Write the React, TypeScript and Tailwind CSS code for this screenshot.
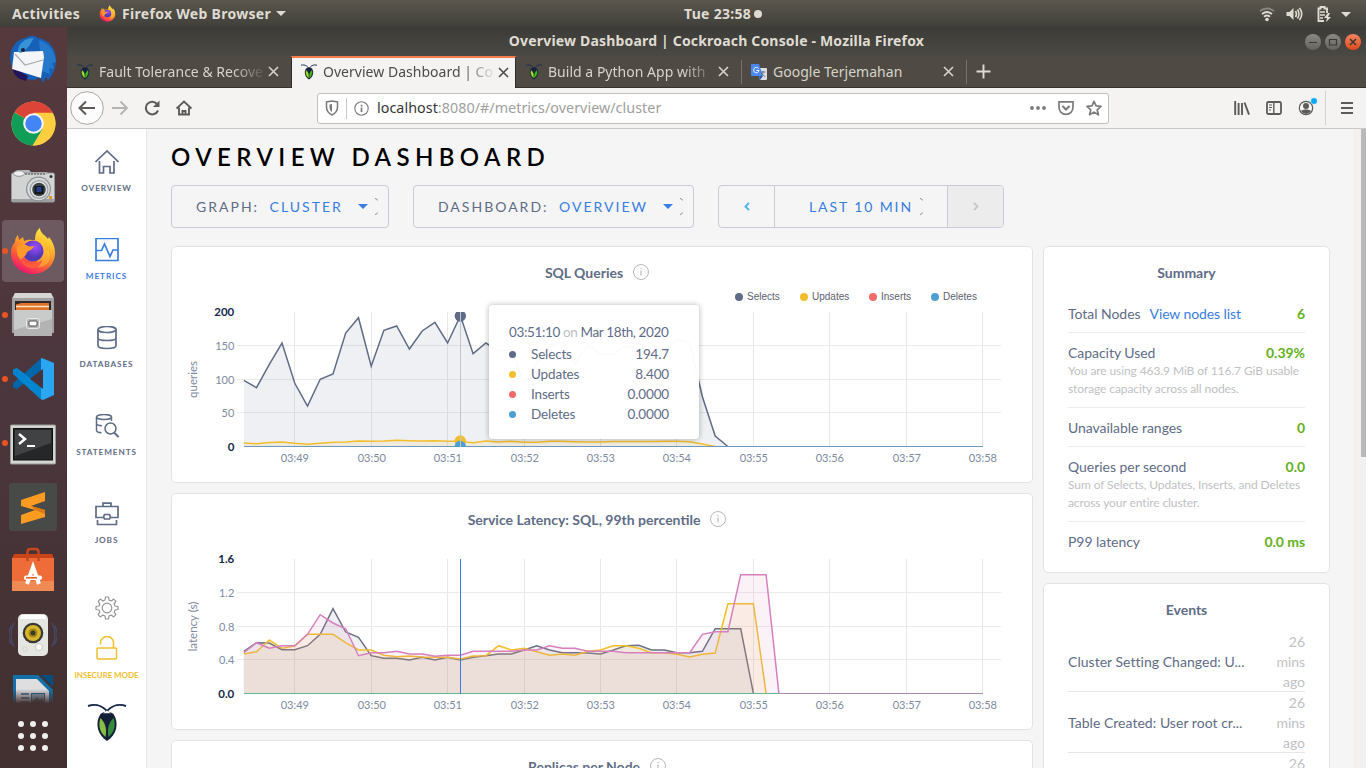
import React from "react";

type Kids = { children?: React.ReactNode };

const STEP = 12.74;
const X0 = 243.8;

const selects = [
  380.3, 387.7, 364.3, 343, 383.3, 406, 379.3, 374, 333, 317.7, 366.3, 330.3, 326, 349, 331, 322.3, 343, 315.8,
  353.7, 343, 351, 349.3, 384, 363.3, 346.7, 341.7, 364, 345, 354.3, 354.3, 345.7, 350, 344, 353.3, 339, 343.3,
  396.7, 436, 446.5,
];
const updates = [
  443, 443.7, 442.5, 442, 443.3, 444.3, 443.3, 442.3, 442, 441, 441.3, 441, 440.3, 440.7, 441, 440.7, 441.3, 441.3,
  442.7, 441, 442, 441.3, 442.3, 442.3, 441.3, 441.3, 441.7, 442, 442, 441.5, 441.5, 441.5, 441.5, 441.3, 441.3, 441.7,
  444, 446.5,
];
const z2 = (a: number[]) => a.map((z) => 490 + z / 3);
const latencyA = z2([
  484, 458, 459, 479, 479, 467, 433, 356, 426, 442, 497, 505, 505, 510, 502, 510, 502, 510, 502, 497, 492, 492, 480,
  467, 480, 488, 488, 489, 492, 480, 467, 466, 480, 480, 488, 488, 484, 416, 416, 416, 610,
]);
const latencyB = z2([
  492, 485, 450, 475, 468, 433, 433, 433, 458, 480, 480, 496, 500, 498, 501, 502, 502, 507, 498, 497, 467, 480, 475,
  485, 496, 492, 496, 484, 480, 467, 467, 475, 488, 488, 493, 501, 493, 489, 341, 341, 341, 610,
]);
const latencyC = z2([
  488, 458, 475, 467, 467, 433, 374, 399, 416, 497, 488, 488, 484, 492, 492, 499, 496, 496, 484, 484, 484, 484, 480,
  480, 467, 475, 475, 484, 484, 484, 488, 488, 488, 488, 488, 488, 433, 425, 425, 254, 254, 254, 610,
]);

function Series({ data, base, color, fill }: { data: number[]; base: number; color: string; fill: string }) {
  const pts = data.map((y, i) => `${(X0 + i * STEP).toFixed(1)},${y.toFixed(1)}`).join(" ");
  const end = X0 + (data.length - 1) * STEP;
  return (
    <g>
      <polygon points={`${X0},${base} ${pts} ${end},${base}`} fill={fill} fillOpacity="0.1" />
      <polyline points={pts} fill="none" stroke={color} strokeWidth="1.5" />
    </g>
  );
}

function Axes({ top, labels, title }: { top: number; labels: string[]; title: string }) {
  const times = ["03:49", "03:50", "03:51", "03:52", "03:53", "03:54", "03:55", "03:56", "03:57", "03:58"];
  const xs = [294.5, 371.5, 447.5, 524.5, 600.5, 676.5, 753.5, 829.5, 906.5, 982.5];
  return (
    <g fontSize="11">
      {xs.map((x, i) => (
        <g key={x}>
          <line x1={x} x2={x} y1={top} y2={top + 135} stroke="#e8e8e8" />
          <text x={x + 0.3} y={top + 150} textAnchor="middle" fill="#7e8a9f">
            {times[i]}
          </text>
        </g>
      ))}
      {[1, 2, 3].map((i) => (
        <line key={i} x1="237" x2="1001" y1={top + Math.round(i * 33.8) - 0.5} y2={top + Math.round(i * 33.8) - 0.5} stroke="#ebebeb" />
      ))}
      {labels.map((l, i) => (
        <text
          key={l}
          x="234.3"
          y={top + 4 + i * 33.75}
          textAnchor="end"
          fill={i % 4 === 0 ? "#152849" : "#7e8a9f"}
          fontWeight={i % 4 === 0 ? 700 : 400}
          fontSize={i % 4 === 0 ? 11.5 : 11}
        >
          {l}
        </text>
      ))}
      <text transform={`translate(197 ${top + 67.5}) rotate(-90)`} textAnchor="middle" fill="#7e8a9f" fontSize="11.5">
        {title}
      </text>
    </g>
  );
}

function InfoDot() {
  return (
    <svg className="ml-[10px] size-4 shrink-0" viewBox="0 0 16 16" fill="none" stroke="#b9b9b9">
      <circle cx="8" cy="8" r="7.5" />
      <path d="M8 6.600v5M8 4v1.200" strokeWidth="1.200" />
    </svg>
  );
}

function GraphCard({ title, children }: Kids & { title: string }) {
  return (
    <section className="h-[237px] w-[862px] shrink-0 rounded-[5px] border border-[#e2e3e4] bg-white">
      <div className="flex h-[51px] items-center justify-center pr-[10px] text-[14px] font-bold text-[#5f6c87]">
        <span>{title}</span>
        <span className="-mt-px">
          <InfoDot />
        </span>
      </div>
      {children}
    </section>
  );
}

function QueriesChart() {
  return (
    <div className="relative">
      <svg className="block h-[184px] w-[860px]" viewBox="172 298 860 184">
        <Axes top={312} labels={["200", "150", "100", "50", "0"]} title="queries" />
        <Series data={selects} base={446.5} color="#5f6c87" fill="#5f6c87" />
        <Series data={updates} base={446.5} color="#f2be2c" fill="#f2be2c" />
        <line x1="244" x2="983" y1="446.5" y2="446.5" stroke="#6d98bd" />
        <clipPath id="plot">
          <rect x="240" y="312" width="750" height="135" />
        </clipPath>
        <g clipPath="url(#plot)">
          <circle cx="460.3" cy="316" r="5.7" fill="#5f6c87" />
          <circle cx="460.3" cy="441" r="5.7" fill="#f2be2c" />
          <circle cx="460.3" cy="446.5" r="5.7" fill="#4e9fd1" />
          <line x1="460.5" x2="460.5" y1="312" y2="447" stroke="#c3c5ca" />
        </g>
      </svg>
      <div className="absolute top-[-9px] left-[562px] flex h-[14px] items-center font-['Liberation_Sans',sans-serif] text-[10px] text-[#5c6070]">
        {[
          ["bg-[#5f6c87]", "Selects", "w-[65px]"],
          ["bg-[#f2be2c]", "Updates", "w-[69px]"],
          ["bg-[#f16969]", "Inserts", "w-[62px]"],
          ["bg-[#4e9fd1]", "Deletes", "w-[60px]"],
        ].map(([dot, name, w]) => (
          <span key={name} className={`flex items-center gap-1 ${w}`}>
            <i className={`mt-px ml-px size-2 shrink-0 rounded-full ${dot}`} />
            {name}
          </span>
        ))}
      </div>
      <div className="absolute top-[7px] left-[317px] h-[134px] w-[210px] rounded-[4px] bg-white/97 pt-[17px] pr-[30px] pl-5 text-[13.5px] leading-5 text-[#5f6c87] shadow-[0_0_5px_1px_rgba(0,0,0,0.22)]">
        <div className="mb-[2px] tracking-[-0.36px] whitespace-nowrap">
          03:51:10 <span className="text-[#bcbfc5]">on</span> Mar 18th, 2020
        </div>
        {[
          ["bg-[#5f6c87]", "Selects", "194.7"],
          ["bg-[#f2be2c]", "Updates", "8.400"],
          ["bg-[#f16969]", "Inserts", "0.0000"],
          ["bg-[#4e9fd1]", "Deletes", "0.0000"],
        ].map(([dot, name, v]) => (
          <div key={name} className="flex h-5 items-center tracking-[-0.15px]">
            <i className={`mr-[15px] size-[7px] rounded-full ${dot}`} />
            <span className="flex-1">{name}</span>
            <span>{v}</span>
          </div>
        ))}
      </div>
    </div>
  );
}

function LatencyChart() {
  return (
    <svg className="block h-[184px] w-[860px]" viewBox="172 545 860 184">
      <Axes top={559} labels={["1.6", "1.2", "0.8", "0.4", "0.0"]} title="latency (s)" />
      <Series data={latencyA} base={693.5} color="#6b7083" fill="#5f6c87" />
      <Series data={latencyB} base={693.5} color="#f2be2c" fill="#f2be2c" />
      <Series data={latencyC} base={693.5} color="#d77fbf" fill="#d77fbf" />
      <line x1="244" x2="779" y1="693.5" y2="693.5" stroke="#62b794" />
      <line x1="779" x2="983" y1="693.5" y2="693.5" stroke="#a98bb4" />
      <line x1="460.5" x2="460.5" y1="559" y2="694" stroke="#3a7de1" />
    </svg>
  );
}

function SideItem({ label, active, children }: Kids & { label: string; active?: boolean }) {
  return (
    <div className={`flex h-[88px] w-full shrink-0 flex-col items-center pt-[21px] ${active ? "text-[#3a7de1]" : "text-[#5f6c87]"}`}>
      <svg className="ml-px size-6" viewBox="0 0 24 24" fill="none" stroke="currentColor" strokeWidth="1.7">
        {children}
      </svg>
      <span className="mt-[8px] text-[8.2px] leading-3 font-bold tracking-[0.9px]">{label}</span>
    </div>
  );
}

function Sidebar() {
  return (
    <nav className="flex w-20 shrink-0 flex-col items-center border-r border-[#e7e7e7] bg-white">
      <SideItem label="OVERVIEW">
        <path d="M.5 12 12 1l11.500 11M4.500 11v12h4v-6.500h6.500V23h4V11" />
      </SideItem>
      <SideItem label="METRICS" active>
        <path d="M1 0.500h22v22H1zM1 12.500h5.500l3-6.500 5.500 12.500 3-6.500h5" />
      </SideItem>
      <SideItem label="DATABASES">
        <ellipse cx="12" cy="3.500" rx="9" ry="3" />
        <path d="M3 3.500v16c0 1.800 4 3 9 3s9-1.200 9-3v-16M3 12c0 1.500 4 2.500 9 2.500s9-1 9-2.500" />
      </SideItem>
      <SideItem label="STATEMENTS">
        <g strokeWidth="1.500">
          <ellipse cx="9" cy="3" rx="7.500" ry="2.500" />
          <path d="M1.500 3v13.500c0 1.300 2 2 5 2.300M16.500 3V7M1.500 9.500c0 1.300 2 2 5.500 2.300" />
          <circle cx="15.500" cy="14.500" r="5.500" />
          <path d="m19.500 19 4 4" strokeWidth="2" />
        </g>
      </SideItem>
      <SideItem label="JOBS">
        <path d="M8 4.200V1.200h8v3M9 15.500H1V4.500h22v11h-8M2.500 18v4.500h19V18M9.500 12.500h5l1 2.500-1 2H9.500l-1-2z" />
      </SideItem>
      <svg className="mt-[27px] ml-px size-6 shrink-0" viewBox="-12 -12 24 24" fill="none" stroke="#969696" strokeWidth="1.200">
        <circle r="4.800" />
        <path d="M-2-8-1.500-11h3L2-8 4.200-7.100 6.700-8.900 8.900-6.700 7.100-4.200 8-2 11-1.500v3L8 2 7.100 4.200 8.900 6.700 6.700 8.900 4.200 7.100 2 8 1.500 11h-3L-2 8-4.200 7.100-6.700 8.900-8.900 6.700-7.100 4.200-8 2-11 1.500v-3L-8-2-7.100-4.200-8.900-6.700-6.700-8.900-4.200-7.100z" strokeLinejoin="round" />
      </svg>
      <svg className="mt-[16px] ml-px size-6 shrink-0" viewBox="0 0 24 24" fill="none" stroke="#f2be2c" strokeWidth="1.500">
        <rect x="2" y="12" width="19.500" height="11" rx="1" />
        <path d="M5.500 8.500V6.500a6.500 6 0 0 1 13 0V12" />
      </svg>
      <span className="mt-[9px] text-[8px] leading-3 font-bold tracking-[-0.08px] whitespace-nowrap text-[#f2be2c]">INSECURE MODE</span>
      <svg className="mt-[21px] h-[40px] w-[40px] shrink-0" viewBox="0 0 40 40">
        <path d="M1 4c9-3 17 1 22 9M39 4C30 1 22 5 17 13" fill="none" stroke="#152849" strokeWidth="1.900" />
        <path d="M13.500 12c4-3 9-3 13 0 6 9 3 21-6.500 27-9.500-6-12.500-18-6.500-27z" fill="#142038" />
        <path d="M13.500 16c5 5 6.500 11 5 19-6-5-7.500-12-5-19z" fill="#87bc42" />
        <path d="M26.500 16c-5 5-6.500 11-5 19 6-5 7.500-12 5-19z" fill="#358a3c" />
        <path d="m16 11.300 4-2.800 4 2.800z" fill="#fff" />
      </svg>
    </nav>
  );
}

function Bug() {
  return (
    <svg className="size-4 shrink-0" viewBox="0 0 16 16">
      <path d="M0 1.200c4-.8 6 .5 8.500 4M16 1.200c-4-.8-6 .5-8.500 4" fill="none" stroke="#1c2c4c" />
      <path d="M5 4.500c2-1.200 4-1.200 6 0 2.500 4 1 8.500-3 11-4-2.500-5.500-7-3-11z" fill="#17233c" />
      <path d="M5.300 6.500c2 2 2.500 4 2.100 7.300-2-2.300-3.300-4.500-2.100-7.300z" fill="#a4e02a" stroke="#a4e02a" strokeWidth=".4" />
      <path d="M10.700 6.500c-2 2-2.500 4-2.100 7.300 2-2.300 3.300-4.500 2.100-7.300z" fill="#3dbb1d" stroke="#3dbb1d" strokeWidth=".4" />
    </svg>
  );
}

function Cross() {
  return (
    <svg className="size-[11px] shrink-0" viewBox="0 0 11 11" fill="none" stroke="currentColor" strokeWidth="1.600">
      <path d="m1 1 9 9M10 1l-9 9" />
    </svg>
  );
}

function Tab({ title, icon, active, sep, width, fade = true }: { title: string; icon?: React.ReactNode; active?: boolean; sep?: boolean; width: string; fade?: boolean }) {
  return (
    <div
      className={
        active
          ? `flex h-8 items-center border-x border-t-2 border-x-[#2f2e2a] border-t-[#f47c4c] bg-[#f4f3f2] pr-3 pb-[2px] pl-[9px] text-[#4b4b4b] ${width}`
          : `relative flex h-8 items-center border-b border-[#33322e] pr-3 pl-[10px] text-[#d6d3cb] ${width}`
      }
    >
      {sep && <i className="absolute top-1 left-0 h-6 w-px bg-[#75726a]" />}
      {icon ?? <Bug />}
      <span
        className={`ml-[6px] flex-1 text-[14px] leading-5 tracking-[0.02px] whitespace-nowrap ${fade ? "[mask-image:linear-gradient(to_right,#000_82%,transparent_102%)]" : ""}`}
      >
        {title}
      </span>
      <span className="ml-[5px] flex">
        <Cross />
      </span>
    </div>
  );
}

function FirefoxLogo({ className }: { className: string }) {
  return (
    <svg className={className} viewBox="0 0 48 48">
      <defs>
        <linearGradient id="ffa" x1=".8" y1="0" x2=".3" y2="1">
          <stop offset="0" stopColor="#fff14c" />
          <stop offset=".35" stopColor="#ffb42a" />
          <stop offset=".65" stopColor="#ff6a30" />
          <stop offset="1" stopColor="#ed1170" />
        </linearGradient>
        <radialGradient id="ffb" cx=".6" cy=".3">
          <stop offset="0" stopColor="#a04cff" />
          <stop offset="1" stopColor="#5139b8" />
        </radialGradient>
      </defs>
      <path d="M6 15c0-3 1-5 3-7l1 5 4-3 1 4c4-2 8-1 11-1 0-6 2-10 5-12 0 5 5 7 8 11l1-2c4 5 6 10 6 16 0 12-10 21-22 21S2 38 2 26c0-4 1-8 4-11z" fill="url(#ffa)" />
      <path d="M27 13c6 0 9 4 9 8s5 0 5 8-7 12-13 11" fill="#ffd23c" opacity=".45" />
      <circle cx="24" cy="24" r="10.500" fill="url(#ffb)" />
      <path d="M8 20c4-3 8-3 11-1 2 1 4 0 6 0-1 3-4 4-7 6-1 5-5 5-6 8-3-3-5-8-4-13z" fill="#ff9a2a" />
      <path d="M12 31c4 7 15 7 21 2-1 7-7 9-12 8s-9-5-9-10z" fill="#ff5a3a" />
    </svg>
  );
}

function DockItem({ dot, active, children }: Kids & { dot?: boolean; active?: boolean }) {
  return (
    <div className="relative flex h-16 w-[67px] shrink-0 items-center justify-center pr-px">
      <div className={`flex size-[62px] items-center justify-center rounded-[4px] ${active ? "bg-[#6d5a60]" : ""}`}>{children}</div>
      {dot && <i className="absolute top-[29px] left-[2px] size-[6px] rounded-full bg-[#e95420]" />}
    </div>
  );
}

function Dock() {
  return (
    <aside className="flex w-[67px] shrink-0 flex-col bg-linear-to-b from-[#55393d] via-[#4b363d] to-[#41302f]">
      <DockItem>
        <svg className="size-12" viewBox="0 0 48 48">
          <path d="M1 22C2 10 9 4 17 3c3-3 9-3 12 0 12 2 18 11 18 22 0 10-4 16-8 20l-2-3-3 6-3-6-5 3C10 45 1 34 1 22z" fill="#1760b7" />
          <path d="M30 5c9 3 16 10 17 22l-4 1 2 6-5-1 1 6-8-3z" fill="#2e83d2" opacity=".7" />
          <path d="M3 32c1 7 5 12 14 14l2-5z" fill="#21145b" />
          <path d="m5 17 29-1 1 6-3 21-29-9z" fill="#f4f5f6" />
          <path d="m6 19 10 11 18-5" fill="none" stroke="#a9adb3" strokeWidth="1.200" />
          <path d="M9 17c0-9 7-14 16-14-3 3-3 9-13 15z" fill="#3593d8" />
          <circle cx="14" cy="15" r="2" fill="#16213c" />
        </svg>
      </DockItem>
      <DockItem>
        <svg className="size-[45px]" viewBox="0 0 48 48">
          <circle cx="24" cy="24" r="23.500" fill="#ffcd40" />
          <path d="M24 24 3.700 12A23.500 23.500 0 0 1 44.400 12.500H24z" fill="#db4437" />
          <path d="M3.700 12.200A23.500 23.500 0 0 0 23 47.500L34 30 24 24z" fill="#109d58" />
          <path d="M24 13h20.700a23.500 23.500 0 0 1-21.500 34.500L34 29z" fill="#ffcd40" />
          <circle cx="24" cy="24" r="11" fill="#f3f3f3" />
          <circle cx="24" cy="24" r="8.800" fill="#4385f5" />
        </svg>
      </DockItem>
      <DockItem>
        <svg className="size-12" viewBox="0 0 48 48">
          <path d="M5 11 8 7h12l2 2h16l2 3H6z" fill="#b9babb" />
          <rect x="2.500" y="10" width="43" height="29" rx="1.500" fill="#d2d3d3" stroke="#94989a" />
          <path d="M3 36h42v3H3z" fill="#9d9fa1" />
          <circle cx="29.500" cy="26" r="12.500" fill="#8d9194" />
          <circle cx="29.500" cy="26" r="11.300" fill="#d8dada" />
          <circle cx="30" cy="26.500" r="9.500" fill="#9a9fa2" />
          <circle cx="30" cy="26.500" r="8.300" fill="#e3e5e5" />
          <circle cx="30" cy="26.500" r="6.800" fill="#3a4044" />
          <rect x="25.500" y="23" width="9" height="8" fill="#15181b" />
          <rect x="27.500" y="24" width="5" height="5" fill="#243e8b" />
          <circle cx="42" cy="13.500" r="1.500" fill="#303334" />
          <rect x="40" y="33" width="3" height="3" fill="#e09a28" />
          <ellipse cx="10" cy="10.500" rx="5.500" ry="2.800" fill="#f0f0f0" stroke="#8f9193" />
          <path d="M16 11h20" stroke="#6f7274" strokeWidth="1.500" strokeDasharray="2 1" />
        </svg>
      </DockItem>
      <DockItem dot active>
        <FirefoxLogo className="size-12" />
      </DockItem>
      <DockItem dot>
        <svg className="size-12" viewBox="0 0 48 48">
          <path d="M6 2h36l3 5v35H3V7z" fill="#9fa09f" />
          <path d="M6 2h36l2 5H4z" fill="#d6d6d5" />
          <path d="M6 10h36v12H6z" fill="#2b2b29" />
          <path d="M7 13.500 12 12h28v7H7z" fill="#e0702a" />
          <path d="M7 15.500h33" stroke="#fbe3c0" strokeWidth="1.300" />
          <path d="M5 19h38v26H5z" fill="#b2b3b2" />
          <path d="M5 19h38v9L5 39z" fill="#c9caca" />
          <rect x="17.500" y="27.500" width="13" height="10" rx="2" fill="#b5b6b6" stroke="#e9e9e9" />
          <rect x="20" y="30" width="8" height="5" rx="1" fill="#fff" stroke="#4c4d4b" />
        </svg>
      </DockItem>
      <DockItem dot>
        <svg className="size-12" viewBox="0 0 48 48">
          <path d="M32.500 3 4 28.500v4L8 34l26-20z" fill="#0065a9" />
          <path d="M4 14.500 8 13l26 20-1.500 12L4 19z" fill="#0086d1" />
          <path d="M34 3.500 45 8v32l-11 5-2-1V3z" fill="#2aa6f2" />
          <path d="m34 14-13 10 13 10z" fill="#48333c" />
        </svg>
      </DockItem>
      <DockItem dot>
        <svg className="size-12" viewBox="0 0 48 48">
          <rect x="1.500" y="6" width="45" height="39" rx="1" fill="#d4d4d2" stroke="#999a96" />
          <rect x="4.500" y="9.500" width="39" height="31.500" fill="#252728" stroke="#111" />
          <path d="M6 11h36v13L6 37z" fill="#494c4d" opacity=".75" />
          <path d="m10 15 6 5-6 5" fill="none" stroke="#fff" strokeWidth="2.500" />
          <path d="M18 27h8" stroke="#fff" strokeWidth="2" />
        </svg>
      </DockItem>
      <DockItem>
        <svg className="size-12" viewBox="0 0 48 48">
          <rect width="48" height="48" rx="3" fill="#484a47" />
          <path d="m12 17 24-8v9l-14 5 14 4v7l-24 7v-9l14-5-14-4z" fill="#ff9b21" />
          <path d="m22 23 14 4v4l-10-4z" fill="#dc7912" />
        </svg>
      </DockItem>
      <DockItem>
        <svg className="size-12" viewBox="0 0 48 48">
          <path d="M3 12 5 7h38l2 5z" fill="#c84318" />
          <path d="M3 11h42v33H3z" fill="#ee6c38" />
          <path d="M3 34h42v10H3z" fill="#f08a55" />
          <path d="M18.500 14V5q0-3 3-3h5q3 0 3 3v9" fill="none" stroke="#c8461c" strokeWidth="2.500" />
          <path d="m18 37 6-17 6 17" fill="none" stroke="#fff" strokeWidth="4" />
          <rect x="15" y="28.500" width="18" height="4.500" rx="2" fill="#fff" />
          <path d="M17 30.800h11" stroke="#e36633" strokeWidth="1.700" />
        </svg>
      </DockItem>
      <DockItem>
        <svg className="size-12" viewBox="0 0 48 48">
          <path d="M5 12c-4 7-4 17 0 24M43 12c4 7 4 17 0 24M2 15c-3 6-3 12 0 18M46 15c3 6 3 12 0 18" fill="none" stroke="#46496a" strokeWidth="1.300" />
          <rect x="9" y="3" width="30" height="42" rx="5" fill="#e5e5e2" />
          <path d="M12 4h24l1 4H11z" fill="#fff" />
          <circle cx="24" cy="22" r="10.300" fill="#373835" />
          <circle cx="24" cy="22" r="8" fill="#d8b62b" />
          <circle cx="24" cy="22" r="4.500" fill="#a48518" />
          <circle cx="24" cy="22" r="2.500" fill="#3b3a26" />
          <circle cx="30" cy="36" r="3.500" fill="#fafaf9" stroke="#c8c8c4" />
          <path d="M14 36h4v4h-4z" fill="none" stroke="#d4d4d0" />
        </svg>
      </DockItem>
      <div className="flex h-[36px] shrink-0 items-start justify-center overflow-hidden pt-[8px] pr-px">
        <svg className="h-[28px] w-[42px] [mask-image:linear-gradient(to_bottom,#000_50%,transparent_102%)]" viewBox="0 0 42 28">
          <path d="M1 0h25l15 15v13H1z" fill="#1271a8" />
          <path d="M29 0h12v12z" fill="#064f7d" />
          <path d="M4 4h21l12 12v12H4z" fill="#dedee0" />
          <path d="M9 19h8M9 23h8M9 27h8" stroke="#23648f" strokeWidth="1.500" />
          <rect x="19.500" y="18.500" width="13" height="9" fill="#8ca7bb" stroke="#23648f" />
          <path d="m20 27 5-5 3 3 2-2 2 4z" fill="#40605d" />
        </svg>
      </div>
      <div className="mt-[18px] flex justify-center">
        <div className="grid grid-cols-3 gap-[6px] pr-px">
          {Array.from({ length: 9 }, (_, i) => (
            <i key={i} className="size-[6px] rounded-full bg-[#f1eeee]" />
          ))}
        </div>
      </div>
    </aside>
  );
}

function TopBar() {
  return (
    <header className="flex h-[27px] shrink-0 items-center bg-linear-to-b from-[#5b574f] to-[#403f39] font-['Noto_Sans',sans-serif] text-[14px] font-bold tracking-[0.3px] text-[#dfdbd2]">
      <span className="w-[86px] pl-3">Activities</span>
      <FirefoxLogo className="ml-[13px] size-[17px]" />
      <span className="ml-[6px] w-[150px] whitespace-nowrap">Firefox Web Browser</span>
      <svg className="ml-[4px] h-[5px] w-[10px]" viewBox="0 0 10 5">
        <path d="M0 0h10L5 5z" fill="#dfdbd2" />
      </svg>
      <span className="ml-[398px] w-[66px] whitespace-nowrap">Tue 23:58</span>
      <i className="ml-[4px] size-[8px] rounded-full bg-[#dfdbd2]" />
      <svg className="ml-auto h-[18px] w-[94px] shrink-0" viewBox="0 0 94 18" fill="none" stroke="#dfdbd2">
        <path d="M1 6q7-5 14 0" stroke="#8b8881" strokeWidth="1.800" />
        <path d="M3 9q5-4 10 0M5 11.800q3-2.500 6 0" strokeWidth="1.800" />
        <circle cx="8" cy="14.500" r="1.800" fill="#dfdbd2" stroke="none" />
        <path d="M27.500 7h3l4-4v12l-4-4h-3z" fill="#dfdbd2" stroke="none" />
        <path d="M36.500 6q2 3 0 6M38.500 4.500q3 4.500 0 9M40.500 3q4.500 6 0 12" strokeWidth="1.600" />
        <g transform="translate(1 0)">
          <path d="M67 8V3.500h-2.500V2h-4v1.500H58.500V16H64" strokeWidth="1.900" />
          <path d="M60 7h5M60 10h5M60 13h3" strokeWidth="1.300" />
          <path d="m68 8-4 5h3l-1 4 5-5h-3l2-4z" fill="#dfdbd2" stroke="none" />
        </g>
        <path d="M82 7h10l-5 5z" fill="#dfdbd2" stroke="none" />
      </svg>
      <span className="w-[13px]" />
    </header>
  );
}

function WindowButton({ className, children }: Kids & { className: string }) {
  return (
    <svg className={`size-4 rounded-full ${className}`} viewBox="0 0 16 16" fill="none" stroke="#3b3933" strokeWidth="1.200">
      {children}
    </svg>
  );
}

function BrowserChrome() {
  return (
    <div className="shrink-0 font-['Noto_Sans',sans-serif]">
      <div className="relative flex h-[29px] items-center justify-center bg-linear-to-b from-[#3c3b37] to-[#4b4943] text-[14px] font-bold tracking-[0.18px] text-[#dfdbd2]">
        <span className="pb-[2px]">Overview Dashboard | Cockroach Console - Mozilla Firefox</span>
        <div className="absolute right-[5px] flex gap-1">
          <WindowButton className="bg-linear-to-b from-[#8b8a84] to-[#65635d]"><path d="M4 8.500h8" /></WindowButton>
          <WindowButton className="bg-linear-to-b from-[#8b8a84] to-[#65635d]"><path d="M4.500 5.500h7v5.500h-7z" /></WindowButton>
          <WindowButton className="bg-linear-to-b from-[#f5855e] to-[#dd4814]"><path d="m5 5 6 6M11 5l-6 6" strokeWidth="1.600" /></WindowButton>
        </div>
      </div>
      <div className="flex h-8 bg-[#4f4b44]">
        <Tab title="Fault Tolerance & Recove" width="w-[224px]" />
        <Tab title="Overview Dashboard | Co" active width="w-[225px]" />
        <Tab title="Build a Python App with" width="w-[225px]" />
        <Tab
          title="Google Terjemahan"
          sep
          fade={false}
          width="w-[225px]"
          icon={
            <svg className="size-4 shrink-0" viewBox="0 0 16 16">
              <path d="M6 4h9q1 0 1 1v10q0 1-1 1H9z" fill="#dedfe0" />
              <path d="M1 0h7l4 12H1q-1 0-1-1V1q0-1 1-1z" fill="#4a89ef" />
              <path d="M7.500 4.500A2.700 2.700 0 1 0 8 6.500H5.500" fill="none" stroke="#fff" />
              <path d="M9.500 8h5M12 7v1c0 2-1 3-2 4M10.800 9c1 2 2 3 3.500 3.500" fill="none" stroke="#6c7580" />
              <path d="M8 12h4l-3 4z" fill="#2858b5" />
            </svg>
          }
        />
        <i className="mt-1 h-6 w-px bg-[#75726a]" />
        <svg className="mt-[8px] ml-[9px] size-[15px]" viewBox="0 0 15 15" stroke="#dfdbd2" strokeWidth="1.900">
          <path d="M7.500.5v14M.5 7.500h14" />
        </svg>
        <span className="-ml-[25px] flex-1 border-b border-[#33322e]" />
      </div>
      <div className="flex h-[41px] items-center border-b border-[#cbc8c5] bg-[#f4f3f2] text-[#5c5b59]">
        <svg className="ml-[3px] size-[34px]" viewBox="0 0 34 34" fill="none" stroke="currentColor" strokeWidth="2">
          <circle cx="17" cy="17" r="16.300" fill="#fcfcfc" stroke="#a9a7a4" strokeWidth="1" />
          <path d="M25 17H10M16 10.500 9.500 17l6.500 6.500" />
        </svg>
        <svg className="ml-[8px] size-4" viewBox="0 0 16 16" fill="none" stroke="#b5b3b1" strokeWidth="1.900">
          <path d="M0 8h14.500M8.500 1.500 15 8l-6.500 6.500" />
        </svg>
        <svg className="ml-[16px] size-4" viewBox="0 0 16 16" fill="none" stroke="currentColor" strokeWidth="2">
          <path d="M14 10.500A6.300 6.300 0 1 1 13 4" />
          <path d="M15.500.5v6.500H9z" fill="currentColor" stroke="none" />
        </svg>
        <svg className="ml-[16px] size-4" viewBox="0 0 16 16" fill="none" stroke="currentColor" strokeWidth="1.900">
          <path d="m.5 8.500 7.500-7 7.500 7M3 7.500v7h10v-7M6.500 15v-4h3v4" />
        </svg>
        <div className="ml-[125px] flex h-[31px] w-[792px] items-center rounded-[3px] border border-[#c3c0bc] bg-white text-[#7b7b7a]">
          <svg className="ml-[7px] h-4 w-[14px]" viewBox="0 0 14 16" fill="none" stroke="currentColor" strokeWidth="1.500">
            <path d="m7 1 5.500 1v5c0 4-2.500 6.500-5.500 8-3-1.500-5.500-4-5.500-8V2z" />
            <path d="M7 4v8c-1.500-1-2.500-2.500-2.500-5V4.500z" fill="currentColor" stroke="none" />
          </svg>
          <i className="ml-[7px] h-[21px] w-px bg-[#c9c7c4]" />
          <svg className="ml-[7px] size-[15px]" viewBox="0 0 15 15" fill="none" stroke="currentColor" strokeWidth="1.100">
            <circle cx="7.500" cy="7.500" r="6.700" />
            <path d="M7.500 6.500v4.500M7.500 3.700v1.700" strokeWidth="1.700" />
          </svg>
          <span className="ml-[8px] text-[14.300px] tracking-[0.05px] text-[#a0a09f]">
            <span className="text-[#363636]">localhost</span>:8080/#/metrics/overview/cluster
          </span>
          <svg className="ml-auto h-4 w-[16px]" viewBox="0 0 16 16" fill="currentColor">
            <circle cx="2" cy="8" r="1.900" />
            <circle cx="8" cy="8" r="1.900" />
            <circle cx="14" cy="8" r="1.900" />
          </svg>
          <svg className="ml-[12px] size-4" viewBox="0 0 16 16" fill="none" stroke="currentColor" strokeWidth="1.700">
            <path d="M1 1.800h14v5.500c0 4-3 7-7 7s-7-3-7-7z" />
            <path d="m4.500 6 3.500 3.500L11.500 6" strokeWidth="2" />
          </svg>
          <svg className="mr-[6px] ml-[12px] size-4" viewBox="0 0 16 16" fill="none" stroke="currentColor" strokeWidth="1.700">
            <path d="m8 1.300 2 4.600 5 .5-3.800 3.400 1.200 5L8 12.100l-4.400 2.700 1.200-5L1 6.400l5-.5z" strokeLinejoin="round" />
          </svg>
        </div>
        <svg className="ml-[125px] size-4" viewBox="0 0 16 16" fill="none" stroke="currentColor" strokeWidth="1.900">
          <path d="M1.200 1v14M4.600 3v12M8 3v12M10.500 2.500 15 14.700" />
        </svg>
        <svg className="ml-[16px] size-4" viewBox="0 0 16 16" fill="none" stroke="currentColor" strokeWidth="1.800">
          <rect x="1" y="2" width="14" height="12" rx="1.500" />
          <path d="M7.800 2v12" strokeWidth="1.400" />
          <path d="M3 5h3M3 7.500h3M3 10h2" strokeWidth="1.100" />
        </svg>
        <svg className="ml-[15px] h-[22px] w-[20px]" viewBox="0 0 20 22" fill="none" stroke="currentColor" strokeWidth="1.200">
          <circle cx="9" cy="11" r="6.700" />
          <circle cx="9" cy="9" r="3" fill="currentColor" stroke="none" />
          <path d="M4 14c2-2 8-2 10 0q-2 3-5 3t-5-3z" fill="currentColor" stroke="none" />
          <circle cx="17" cy="4" r="3.300" fill="#00a8fb" stroke="#f4f3f2" strokeWidth=".5" />
        </svg>
        <i className="ml-[8px] h-[34px] w-px bg-[#d3d1ce]" />
        <svg className="ml-[15px] h-3 w-3" viewBox="0 0 12 12" stroke="currentColor" strokeWidth="2">
          <path d="M0 1h12M0 6h12M0 11h12" />
        </svg>
      </div>
    </div>
  );
}

function Ticks() {
  return (
    <svg className="h-[17px] w-[3px]" viewBox="0 0 3 17" fill="none" stroke="#77777c" strokeWidth=".8">
      <path d="M0 .5Q2 .5 2.500 2.500M0 16.500q2 0 2.500-2" />
    </svg>
  );
}

function Select({ name, value, className }: { name: string; value: string; className: string }) {
  return (
    <div className={`flex h-[43px] items-center rounded-[4px] border border-[#c8cbd4] pl-6 text-[14px] tracking-[2px] text-[#5f6c87] ${className}`}>
      {name}:<span className="ml-[10.500px] text-[#3a7de1]">{value}</span>
      <svg className="mr-[7px] ml-auto h-[5px] w-[10px]" viewBox="0 0 10 5">
        <path d="M0 0h10L5 5z" fill="#3a7de1" />
      </svg>
      <span className="mr-[10px] -mt-px">
        <Ticks />
      </span>
    </div>
  );
}

function StatRow({ label, value, note, link, last }: { label: string; value: string; note?: string; link?: string; last?: boolean }) {
  return (
    <div className={`pt-[9px] pb-[9px] ${last ? "" : "border-b border-[#ededee]"}`}>
      <div className="flex h-5 items-center">
        <span>{label}</span>
        {link && <span className="ml-[9px] tracking-[-0.1px] text-[#3a7de1]">{link}</span>}
        <span className="ml-auto font-bold text-[#64b020]">{value}</span>
      </div>
      {note && <p className="text-[12px] leading-[18px] tracking-[-0.09px] whitespace-pre text-[#c0c1c5]">{note}</p>}
    </div>
  );
}

function EventRow({ text }: { text: string }) {
  return (
    <div className="flex h-[61px] items-center justify-between border-b border-[#e6e7e8]">
      <span className="tracking-[0.03px]">{text}</span>
      <span className="w-[34px] pt-[2px] text-right leading-5 text-[#c0c1c5]">26 mins ago</span>
    </div>
  );
}

export default function App() {
  return (
    <div className="flex h-[768px] w-[1366px] flex-col overflow-hidden font-['Lato',sans-serif]">
      <TopBar />
      <div className="flex min-h-0 flex-1">
        <Dock />
        <div className="flex min-w-0 flex-1 flex-col">
          <BrowserChrome />
          <div className="flex min-h-0 flex-1 bg-[#f5f5f5]">
            <Sidebar />
            <main className="flex min-w-0 flex-1 flex-col overflow-hidden pl-6">
              <h1 className="mt-[13px] h-[29px] text-[24px] leading-[29px] font-semibold tracking-[5.400px] whitespace-nowrap text-black">OVERVIEW DASHBOARD</h1>
              <div className="mt-[14px] flex gap-6">
                <Select name="GRAPH" value="CLUSTER" className="w-[218px]" />
                <Select name="DASHBOARD" value="OVERVIEW" className="w-[281px]" />
                <div className="flex h-[43px] w-[286px] overflow-hidden rounded-[4px] border border-[#c8cbd4] text-[14px] tracking-[1.900px] text-[#3a7de1]">
                  <span className="flex w-14 items-center justify-center border-r border-[#c8cbd4]">
                    <svg className="h-[9px] w-[6px]" viewBox="0 0 6 9" fill="none" stroke="#4bb5f5" strokeWidth="1.900">
                      <path d="M5 .8 1.500 4.500 5 8.200" />
                    </svg>
                  </span>
                  <span className="flex w-[173px] items-center border-r border-[#c8cbd4] pl-[34px] whitespace-nowrap">
                    LAST 10 MIN
                    <span className="ml-[7px] -mt-px">
                      <Ticks />
                    </span>
                  </span>
                  <span className="flex flex-1 items-center justify-center bg-[#ececec]">
                    <svg className="h-[9px] w-[6px]" viewBox="0 0 6 9" fill="none" stroke="#c4c6ce" strokeWidth="1.900">
                      <path d="M1 .8 4.500 4.500 1 8.200" />
                    </svg>
                  </span>
                </div>
              </div>
              <div className="mt-[18px] flex gap-[10px]">
                <div className="flex flex-col gap-[10px]">
                  <GraphCard title="SQL Queries">
                    <QueriesChart />
                  </GraphCard>
                  <GraphCard title="Service Latency: SQL, 99th percentile">
                    <LatencyChart />
                  </GraphCard>
                  <GraphCard title="Replicas per Node" />
                </div>
                <div className="flex w-[287px] shrink-0 flex-col gap-[10px] text-[14px] tracking-[-0.04px] text-[#5f6c87]">
                  <section className="h-[327px] rounded-[5px] border border-[#e2e3e4] bg-white px-6">
                    <h2 className="mt-[16px] h-5 text-center leading-5 font-bold">Summary</h2>
                    <div className="mt-[11px]">
                      <StatRow label="Total Nodes" link="View nodes list" value="6" />
                      <StatRow label="Capacity Used" value="0.39%" note={"You are using 463.9 MiB of 116.7 GiB usable\nstorage capacity across all nodes."} />
                      <StatRow label="Unavailable ranges" value="0" />
                      <StatRow label="Queries per second" value="0.0" note={"Sum of Selects, Updates, Inserts, and Deletes\nacross your entire cluster."} />
                      <StatRow label="P99 latency" value="0.0 ms" last />
                    </div>
                  </section>
                  <section className="h-[300px] rounded-[5px] border border-[#e2e3e4] bg-white px-6">
                    <h2 className="mt-[16px] mb-[11px] h-5 text-center leading-5 font-bold">Events</h2>
                    <EventRow text="Cluster Setting Changed: U..." />
                    <EventRow text="Table Created: User root cr..." />
                    <div className="flex h-[61px] justify-end">
                      <span className="w-[34px] pt-px text-right leading-5 text-[#c0c1c5]">26</span>
                    </div>
                  </section>
                </div>
              </div>
            </main>
            <div className="flex w-[13px] shrink-0 justify-end bg-[#f2f1f0]">
              <i className="h-[328px] w-[5px] bg-[#bbb9b8]" />
            </div>
          </div>
        </div>
      </div>
    </div>
  );
}
